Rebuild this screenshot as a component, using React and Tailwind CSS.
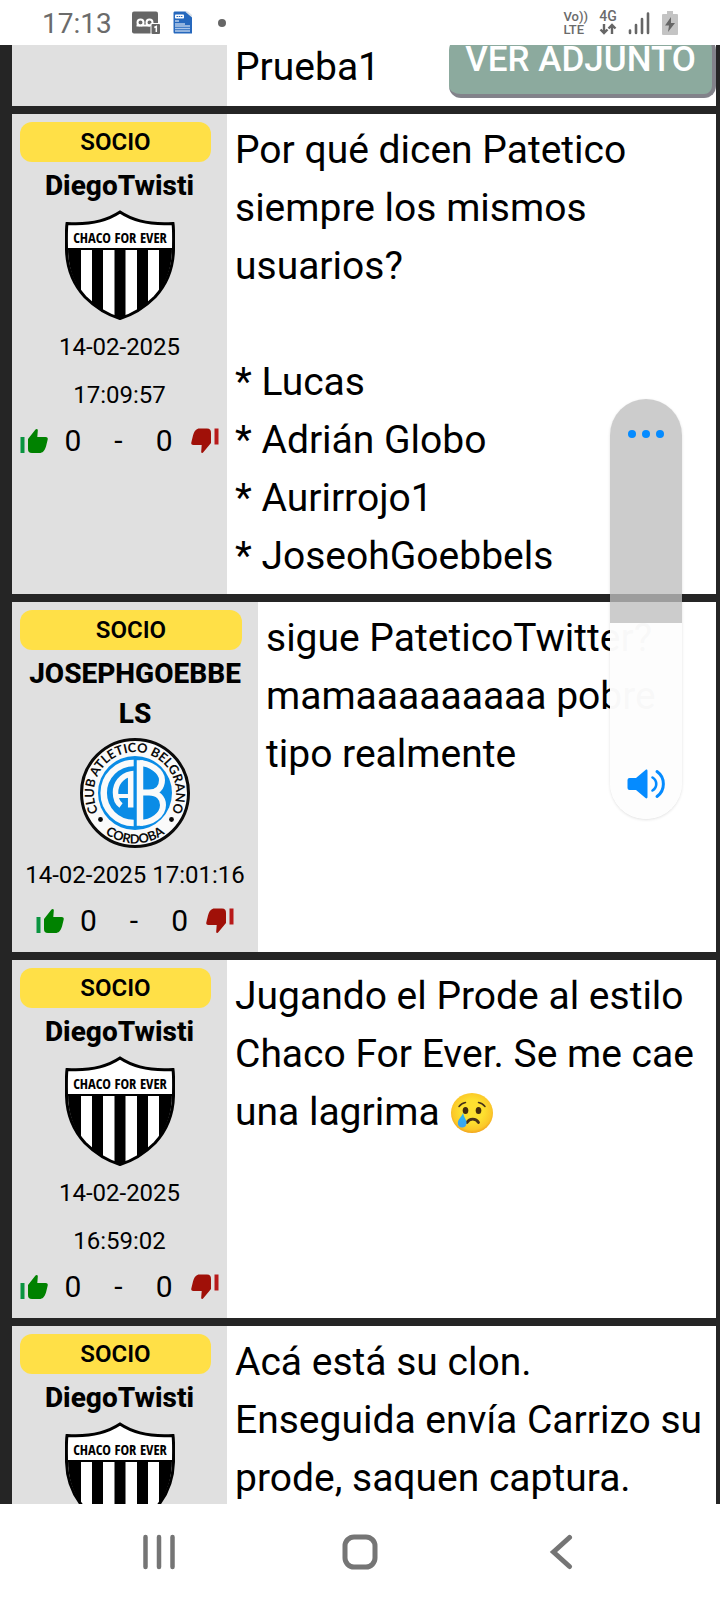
import React from "react";

function ChacoCrest() {
  return (
    <svg viewBox="0 0 110 110" className="size-[110px]" role="img" aria-label="Chaco For Ever">
      <defs>
        <clipPath id="chaco-field">
          <path d="M3 38H107C107 58 101 74 89 88C78 100 66 106 55 109C44 106 32 100 21 88C9 74 3 58 3 38Z" />
        </clipPath>
      </defs>
      <path
        d="M55 2C43 10 24 15 2 13.500C1 20 1.500 33 1.500 40C2 60 9 75 20 87C32 99 43 105 55 108.500C67 105 78 99 90 87C101 75 108 60 108.500 40C108.500 33 109 20 108 13.500C86 15 67 10 55 2Z"
        fill="#fff"
        stroke="#000"
        strokeWidth="3"
      />
      <g clipPath="url(#chaco-field)" fill="#000">
        <rect x="2" y="37" width="106" height="3" />
        <rect x="2" y="37" width="14" height="72" />
        <rect x="27" y="37" width="11" height="72" />
        <rect x="49.500" y="37" width="11" height="72" />
        <rect x="72" y="37" width="11" height="72" />
        <rect x="94" y="37" width="14" height="72" />
      </g>
      <text
        x="55"
        y="32.500"
        textAnchor="middle"
        fontFamily="'Open Sans Condensed', 'Roboto Condensed', sans-serif"
        fontWeight="700"
        fontSize="14.500"
      >
        CHACO FOR EVER
      </text>
    </svg>
  );
}

function BelgranoCrest() {
  return (
    <svg viewBox="0 0 110 110" className="size-[110px]" role="img" aria-label="Club Atletico Belgrano Cordoba">
      <defs>
        <path id="belgrano-top" d="M22 79.500A41 41 0 1 1 88 79.500" />
        <path id="belgrano-bottom" d="M12 80.500A49.500 49.500 0 0 0 98 80.500" />
      </defs>
      <circle cx="55" cy="55" r="53.500" fill="#fafafa" stroke="#0a0a0a" strokeWidth="3" />
      <circle cx="55" cy="55" r="37" fill="#0a8ce6" />
      <g fill="#0a0a0a" fontFamily="Lato, sans-serif" fontWeight="700">
        <text fontSize="12.800">
          <textPath href="#belgrano-top" startOffset="50%" textAnchor="middle">
            CLUB ATLETICO BELGRANO
          </textPath>
        </text>
        <text fontSize="12.800">
          <textPath href="#belgrano-bottom" startOffset="50%" textAnchor="middle">
            CORDOBA
          </textPath>
        </text>
        <circle cx="20.500" cy="81.500" r="2.400" />
        <circle cx="91.500" cy="81.500" r="2.400" />
      </g>
      <g fill="none" stroke="#fafafa">
        <path d="M53.700 25A30 30 0 0 0 53.700 85" strokeWidth="6.500" />
        <path d="M50.700 69.500V36C41 38 35.500 46 35.500 54.500C35.500 61 37.500 65 41 67.500" strokeWidth="5.500" />
        <path d="M38 58H51" strokeWidth="4" />
        <path
          d="M60 25.200C70 25.200 82 33 82 42C82 50 77 54.500 69 54.500H60M69 54.500C78 54.500 83 60 83 67C83 77 72 84.800 60 84.800"
          strokeWidth="6"
        />
        <path d="M60 22.200V87.800" strokeWidth="6.500" />
      </g>
    </svg>
  );
}

function ThumbUp() {
  return (
    <svg viewBox="0 0 28 26" className="h-[26px] w-7" aria-hidden="true">
      <path d="M0.500 9H4.500V25H0.500Z" fill="#0a9440" />
      <path
        d="M8 11L15.500 1.500C16.500 0.300 18 1 17.800 2.500L17.300 9H25.500C27.500 9 28 10 27.700 11.500L26 18.500C24.500 23 22.500 25 19.500 25H12C9 25 8 23.500 8 21Z"
        fill="#008200"
      />
    </svg>
  );
}

function ThumbDown() {
  return (
    <svg viewBox="0 0 28 26" className="h-[26px] w-7" aria-hidden="true">
      <path d="M23.500 0.500H27.500V16.500H23.500Z" fill="#b81a1a" />
      <path
        d="M20 15L12.500 24C11.500 25.700 10 25 10.200 23.500L10.700 17H2.500C0.500 17 0 16 0.300 14.500L2 7.500C3.500 2.500 5.500 0.500 8.500 0.500H16C19 0.500 20 2 20 5Z"
        fill="#a01008"
      />
    </svg>
  );
}

function CryingFace() {
  return (
    <svg viewBox="0 0 42 42" className="ml-0.5 inline-block size-[42px] align-[-9px]" role="img" aria-label="😢">
      <defs>
        <radialGradient id="face-fill" cx="0.5" cy="0.45" r="0.55">
          <stop offset="0.5" stopColor="#fde030" />
          <stop offset="0.85" stopColor="#fbc829" />
          <stop offset="1" stopColor="#f2a61e" />
        </radialGradient>
        <linearGradient id="tear-fill" x1="0" y1="0" x2="0" y2="1">
          <stop offset="0" stopColor="#29b6f6" />
          <stop offset="1" stopColor="#3da2ee" />
        </linearGradient>
      </defs>
      <ellipse cx="21" cy="21" rx="21" ry="20" fill="url(#face-fill)" />
      <g fill="none" stroke="#47311a" strokeLinecap="round">
        <path d="M8 14.500C10 12 12 10.800 14.500 10.500" strokeWidth="1.500" />
        <path d="M27.500 10.500C30 10.800 32 12 34 14.500" strokeWidth="1.500" />
        <path d="M16 30.500C18.500 26 25 26 27.500 30.500" strokeWidth="2.800" />
      </g>
      <ellipse cx="14.500" cy="18.500" rx="2.800" ry="3.600" fill="#422b0d" />
      <ellipse cx="27.500" cy="18.500" rx="2.800" ry="3.600" fill="#422b0d" />
      <path d="M12 21C13 25.500 15.500 27.500 15.500 31C15.500 34 13.500 35.500 11.200 35.500C8.500 35.500 6.800 33.500 6.800 31C6.800 27.500 10.500 25 12 21Z" fill="url(#tear-fill)" />
    </svg>
  );
}

function StatusBar() {
  return (
    <header className="flex h-[45px] shrink-0 items-center bg-white pr-[42px] pl-[42px] text-[#6b6b6b]">
      <time className="pt-0.5 text-[28px] leading-8">17:13</time>
      <svg viewBox="0 0 28 24" className="ml-5 h-6 w-7" fill="none" aria-hidden="true">
        <rect x="0" y="0.500" width="26" height="22" rx="2" fill="#666" />
        <g stroke="#fff" strokeWidth="2">
          <circle cx="8.500" cy="11.500" r="3" />
          <circle cx="17.500" cy="11.500" r="3" />
          <path d="M8.500 14.500H18" />
          <path d="M4.500 14.500H8" />
        </g>
        <rect x="18.500" y="12" width="10" height="12" fill="#fff" />
        <rect x="19.500" y="13" width="8.500" height="10" rx="1" fill="#666" />
        <path d="M22.300 16.500L24.300 15.500V21" stroke="#fff" strokeWidth="1.500" />
      </svg>
      <svg viewBox="0 0 20 24" className="ml-[13px] h-6 w-5" aria-hidden="true">
        <path d="M2 0.500H13L19 6V22.500H2C1 22.500 0.500 22 0.500 21V2C0.500 1 1 0.500 2 0.500Z" fill="#2668bd" />
        <path d="M12 0.500H15L19 4V6.500Z" fill="#dbe2ea" />
        <rect x="2" y="3.500" width="9" height="4" rx="0.800" fill="#fff" />
        <path d="M3.500 5.500H9.500" stroke="#2668bd" strokeDasharray="1.500 0.700" />
        <path d="M2 10H6M2 13H12M2 15H17M2 20H17" stroke="#fff" />
        <path d="M2 17.500H17" stroke="#a9c5ea" strokeWidth="1.500" />
      </svg>
      <span className="ml-[25px] size-2 rounded-full bg-[#666]" />
      <div className="ml-auto flex items-center">
        <div className="text-[13px] leading-[13px] font-medium">
          <div>Vo))</div>
          <div>LTE</div>
        </div>
        <div className="ml-[11px] flex flex-col items-center">
          <span className="text-[14px] leading-[13px] font-medium">4G</span>
          <svg viewBox="0 0 18 12" className="h-3 w-[18px]" fill="none" stroke="#666" strokeWidth="2.400" aria-hidden="true">
            <path d="M5 1V10M1.500 6.500L5 10L8.500 6.500M13 11V2M9.500 5.500L13 2L16.500 5.500" />
          </svg>
        </div>
        <svg viewBox="0 0 22 24" className="ml-[11px] h-6 w-[22px]" stroke="#666" strokeWidth="2.600" strokeLinecap="round" aria-hidden="true">
          <path d="M2 19.500V22M8 14V22M14 8V22M20 2.500V22" />
        </svg>
        <svg viewBox="0 0 16 24" className="ml-3 h-6 w-4" aria-hidden="true">
          <path d="M5 0H11V3H15Q16 3 16 4V23Q16 24 15 24H1Q0 24 0 23V4Q0 3 1 3H5Z" fill="#c4c4c4" />
          <path d="M9 6L3 14.500H7L6 21L13 12H9Z" fill="#666" />
        </svg>
      </div>
    </header>
  );
}

function Votes() {
  return (
    <div className="mb-0.5 flex h-[43px] items-center justify-center text-[30px] leading-[42px]">
      <button type="button" aria-label="Me gusta">
        <ThumbUp />
      </button>
      <span className="ml-4">0</span>
      <span className="mx-[33px]">-</span>
      <span className="mr-[18px]">0</span>
      <button type="button" aria-label="No me gusta">
        <ThumbDown />
      </button>
    </div>
  );
}

function Post({ name, date, crest, wide, children }) {
  return (
    <article className="flex shrink-0 bg-white">
      <div className={`shrink-0 bg-[#e0e0e0] py-2 text-center ${wide ? "w-[246px]" : "w-[215px]"}`}>
        <div className="mr-4 ml-2 rounded-xl bg-[#ffe047] text-[24px] leading-10 font-semibold">SOCIO</div>
        <div className="mt-1 px-3 text-[28px] leading-10 font-extrabold break-all">{name}</div>
        <div className="mt-1 flex justify-center">{crest}</div>
        <div className={`mt-[3px] text-[24px] leading-[48px] ${wide ? "px-2" : "px-6"}`}>{date}</div>
        <Votes />
      </div>
      <div className="min-w-0 flex-1 px-2 pt-[7px] pb-[9px] text-[39px] leading-[58px]">{children}</div>
    </article>
  );
}

function VolumePanel() {
  return (
    <aside className="absolute top-[399px] right-[38px] flex h-[420px] w-[72px] flex-col overflow-hidden rounded-full shadow-[0_1px_3px_rgba(0,0,0,0.12)]">
      <div className="flex h-[224px] justify-center bg-[#bebebe]/79 pt-[30px]">
        <button type="button" aria-label="Más opciones" className="flex h-2.5 items-center gap-1.5">
          <span className="size-2 rounded-full bg-[#058bff]" />
          <span className="size-2 rounded-full bg-[#058bff]" />
          <span className="size-2 rounded-full bg-[#058bff]" />
        </button>
      </div>
      <div className="flex flex-1 items-end justify-center bg-[#fdfdfd]/98 pb-5">
        <svg viewBox="0 0 38 30" className="h-[30px] w-[38px]" fill="none" aria-hidden="true">
          <path d="M2.500 9H9L18.500 1C19.500 0.300 20.500 0.500 20.500 2V28C20.500 29.500 19.500 29.700 18.500 29L9 21H2.500Q0.500 21 0.500 19V11Q0.500 9 2.500 9Z" fill="#058bff" />
          <path d="M25.500 8.500C30.500 11.500 30.500 18.500 25.500 21.500" stroke="#058bff" strokeWidth="2.600" strokeLinecap="round" />
          <path d="M30 2.500C38.500 8.500 38.500 21.500 30 27.500" stroke="#058bff" strokeWidth="3" strokeLinecap="round" />
        </svg>
      </div>
      <input
        type="range"
        aria-label="Volumen"
        defaultValue="47"
        className="absolute inset-x-0 top-16 h-72 w-full opacity-0 [writing-mode:vertical-lr] [direction:rtl]"
      />
    </aside>
  );
}

function NavigationBar() {
  return (
    <nav className="grid h-24 shrink-0 grid-cols-3 place-items-center bg-white px-[58px]">
      <button type="button" aria-label="Recientes">
        <svg viewBox="0 0 36 36" className="size-9" stroke="#757575" strokeWidth="4.500" strokeLinecap="round" aria-hidden="true">
          <path d="M4.500 3V33M18 3V33M31.500 3V33" />
        </svg>
      </button>
      <button type="button" aria-label="Inicio">
        <svg viewBox="0 0 36 36" className="size-9" fill="none" stroke="#757575" strokeWidth="5" aria-hidden="true">
          <rect x="3" y="3" width="30" height="30" rx="9" />
        </svg>
      </button>
      <button type="button" aria-label="Atrás">
        <svg viewBox="0 0 36 36" className="size-9" fill="none" stroke="#757575" strokeWidth="5" strokeLinecap="round" aria-hidden="true">
          <path d="M26.500 3.500L10.500 18L26.500 32.500" />
        </svg>
      </button>
    </nav>
  );
}

export default function App() {
  return (
    <div className="relative flex h-screen flex-col overflow-hidden bg-white font-[Roboto,sans-serif] text-black">
      <StatusBar />
      <main className="flex min-h-0 flex-1 flex-col gap-2 overflow-hidden bg-[#252525] pr-1 pl-3">
        <article className="flex h-[61px] shrink-0 items-stretch overflow-hidden bg-white">
          <div className="w-[215px] shrink-0 bg-[#e0e0e0]" />
          <div className="flex flex-1 items-end justify-between overflow-hidden pl-2">
            <p className="pb-2.5 text-[39px] leading-[58px]">Prueba1</p>
            <button
              type="button"
              className="mb-2 rounded-xl border-r-4 border-b-4 border-[#82828a] bg-[#8caa9e] px-4 pb-3 text-[35px] leading-[44px] font-medium text-white"
            >
              VER ADJUNTO
            </button>
          </div>
        </article>
        <Post name="DiegoTwisti" date="14-02-2025 17:09:57" crest={<ChacoCrest />}>
          <p>Por qué dicen Patetico siempre los mismos usuarios?</p>
          <ul className="mt-[58px]">
            <li>* Lucas</li>
            <li>* Adrián Globo</li>
            <li>* Aurirrojo1</li>
            <li>* JoseohGoebbels</li>
          </ul>
        </Post>
        <Post name="JOSEPHGOEBBELS" date="14-02-2025 17:01:16" crest={<BelgranoCrest />} wide>
          <p>sigue PateticoTwitter? mamaaaaaaaaa pobre tipo realmente</p>
        </Post>
        <Post name="DiegoTwisti" date="14-02-2025 16:59:02" crest={<ChacoCrest />}>
          <p>
            Jugando el Prode al estilo Chaco For Ever. Se me cae una lagrima <CryingFace />
          </p>
        </Post>
        <Post name="DiegoTwisti" date="" crest={<ChacoCrest />}>
          <p>Acá está su clon. Enseguida envía Carrizo su prode, saquen captura.</p>
        </Post>
      </main>
      <NavigationBar />
      <VolumePanel />
    </div>
  );
}
